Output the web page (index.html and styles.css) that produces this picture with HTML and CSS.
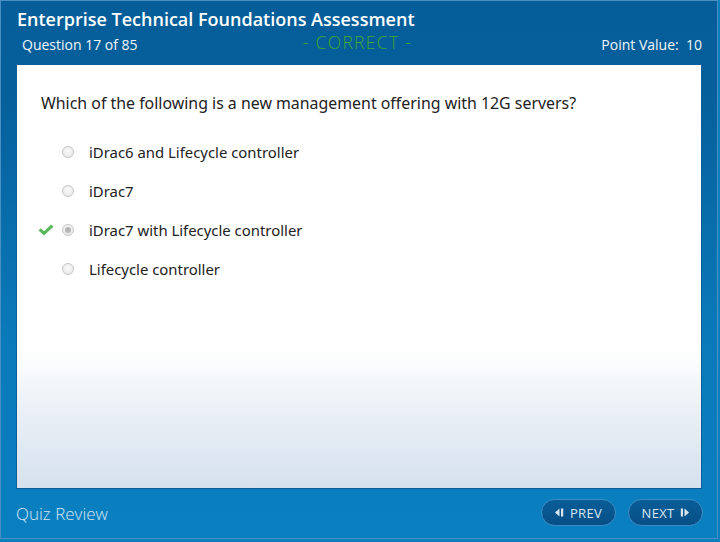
FILE: index.html
```html
<!DOCTYPE html>
<html>
<head>
<meta charset="utf-8">
<link rel="stylesheet" href="styles.css">
</head>
<body>
<div class="frame">
  <header class="header">
    <h1 class="title">Enterprise Technical Foundations Assessment</h1>
    <div class="subrow">
      <span class="qnum">Question 17 of 85</span>
      <span class="status">- CORRECT -</span>
      <span class="points">Point Value:&nbsp; 10</span>
    </div>
  </header>
  <main class="panel">
    <p class="question">Which of the following is a new management offering with 12G servers?</p>
    <ul class="options">
      <li class="option"><span class="mark"></span><span class="radio"></span><span class="label">iDrac6 and Lifecycle controller</span></li>
      <li class="option"><span class="mark"></span><span class="radio"></span><span class="label">iDrac7</span></li>
      <li class="option"><span class="mark"><svg width="16" height="12" viewBox="0 0 16 12"><path d="M0.5 6.5 L3 4.3 L6 7.2 L13.2 0.6 L15.5 2.8 L6 11.6 Z" fill="#5cb85c"/></svg></span><span class="radio selected"></span><span class="label">iDrac7 with Lifecycle controller</span></li>
      <li class="option"><span class="mark"></span><span class="radio"></span><span class="label">Lifecycle controller</span></li>
    </ul>
  </main>
  <footer class="footer">
    <span class="review">Quiz Review</span>
    <div class="nav">
      <button class="btn"><svg width="9" height="9" viewBox="0 0 9 9"><path d="M0 4.5 L4.5 0.5 L4.5 8.5 Z" fill="#d8e6f2"/><rect x="6" y="0.5" width="2.2" height="8" fill="#d8e6f2"/></svg>PREV</button>
      <button class="btn">NEXT<svg width="9" height="9" viewBox="0 0 9 9"><rect x="0.8" y="0.5" width="2.2" height="8" fill="#d8e6f2"/><path d="M4.5 0.5 L9 4.5 L4.5 8.5 Z" fill="#d8e6f2"/></svg></button>
    </div>
  </footer>
</div>
</body>
</html>
```
FILE: styles.css
```css
html, body {
  margin: 0;
  padding: 0;
  background: #0a7fbf;
}
body {
  width: 720px;
  height: 542px;
  overflow: hidden;
}
.frame {
  box-sizing: border-box;
  width: 718px;
  height: 539px;
  border: 1px solid #4a8fc2;
  background: linear-gradient(to bottom, #055e99 0px, #055f9a 90px, #0a79b9 330px, #0a80c1 539px);
  display: flex;
  flex-direction: column;
  font-family: "Open Sans", sans-serif;
}
.header {
  height: 64px;
  box-sizing: border-box;
  padding: 6px 15px 0 16px;
  color: #fff;
}
.title {
  margin: 0;
  font-size: 18px;
  font-weight: 600;
  line-height: 24px;
  letter-spacing: 0;
}
.subrow {
  display: grid;
  grid-template-columns: 1fr auto 1fr;
  align-items: center;
  height: 26px;
  margin-top: 0;
}
.qnum {
  font-size: 14px;
  font-weight: 400;
  padding-left: 5px;
  color: #f2f6fa;
}
.status {
  font-size: 17.5px;
  font-weight: 300;
  color: #42a830;
  letter-spacing: 1.3px;
  margin-top: -5px;
  padding-right: 4px;
}
.points {
  justify-self: end;
  font-size: 14px;
  color: #f2f6fa;
}
.panel {
  margin: 0 15px 0 15px;
  height: 424px;
  box-sizing: border-box;
  border: 1px solid #0b5e97;
  border-top: none;
  background: linear-gradient(to bottom, #ffffff 0px, #ffffff 285px, #eaf0f6 345px, #d6e1ee 423px);
  padding: 28px 0 0 24px;
  color: #222;
}
.question {
  margin: 0;
  font-family: "Noto Sans", sans-serif;
  font-size: 15.9px;
  line-height: 20px;
}
.options {
  list-style: none;
  margin: 19px 0 0 -3px;
  padding: 0;
}
.option {
  display: flex;
  align-items: center;
  height: 39px;
  font-family: "Noto Sans", sans-serif;
  font-size: 14.9px;
  color: #222;
}
.mark {
  width: 24px;
  display: flex;
  align-items: center;
}
.radio {
  box-sizing: border-box;
  width: 12px;
  height: 12px;
  border-radius: 50%;
  border: 1px solid #c6c6c6;
  background: radial-gradient(circle at 50% 40%, #fafafa 0%, #e4e4e4 100%);
  margin-right: 15px;
  position: relative;
}
.radio.selected::after {
  content: "";
  position: absolute;
  left: 2px;
  top: 2px;
  width: 6px;
  height: 6px;
  border-radius: 50%;
  background: #b4b4b4;
}
.footer {
  flex: 1;
  display: flex;
  align-items: center;
  justify-content: space-between;
  padding: 0 14px 0 15px;
}
.review {
  font-size: 17px;
  font-weight: 300;
  color: #d4e6f3;
}
.nav {
  display: flex;
  gap: 12px;
  margin-top: -2px;
}
.btn {
  box-sizing: border-box;
  width: 75px;
  height: 27px;
  border-radius: 14px;
  border: 1px solid #3f8bc3;
  background: linear-gradient(to bottom, #0a5d98, #064f86);
  color: #d8e6f2;
  font-family: "Open Sans", sans-serif;
  font-size: 13px;
  display: flex;
  align-items: center;
  justify-content: center;
  gap: 6px;
  padding: 0;
  letter-spacing: 0.3px;
}
```
